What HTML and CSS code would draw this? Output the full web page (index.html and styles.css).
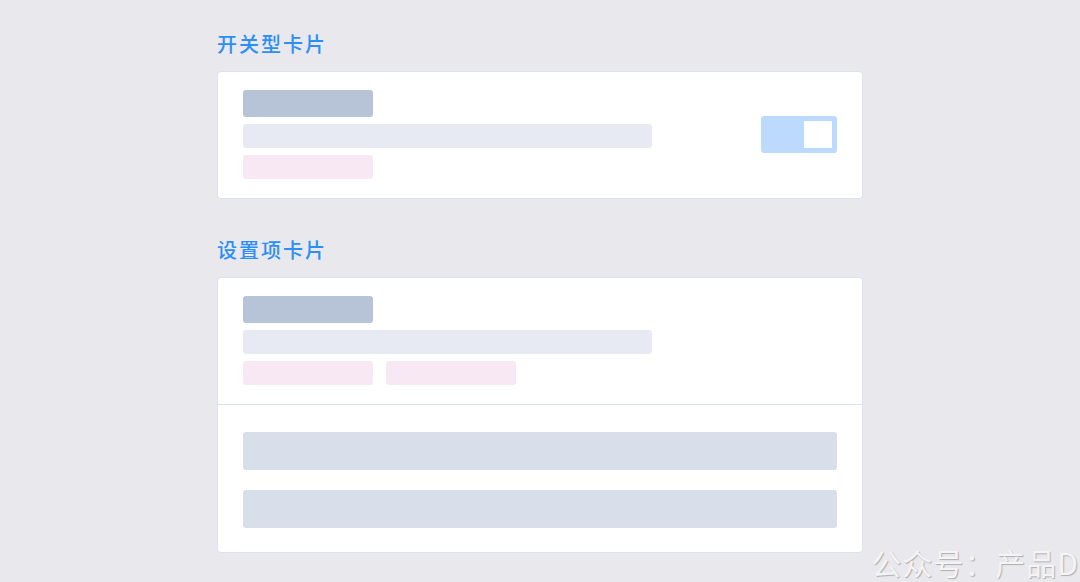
FILE: index.html
```html
<!DOCTYPE html>
<html lang="zh-CN">
<head>
<meta charset="UTF-8" />
<meta name="viewport" content="width=device-width, initial-scale=1" />
<title>卡片</title>
<link rel="stylesheet" href="styles.css">
</head>
<body>
<main class="page">

  <!-- 开关型卡片 -->
  <section class="group">
    <h2 class="group-title">开关型卡片</h2>
    <div class="card card-switch">
      <div class="sk-body">
        <div class="sk sk-title"></div>
        <div class="sk sk-line"></div>
        <div class="sk-tags">
          <div class="sk sk-tag"></div>
        </div>
      </div>
      <div class="switch" role="switch" aria-checked="true">
        <span class="switch-knob"></span>
      </div>
    </div>
  </section>

  <!-- 设置项卡片 -->
  <section class="group">
    <h2 class="group-title">设置项卡片</h2>
    <div class="card">
      <div class="card-head">
        <div class="sk-body">
          <div class="sk sk-title"></div>
          <div class="sk sk-line"></div>
          <div class="sk-tags">
            <div class="sk sk-tag"></div>
            <div class="sk sk-tag"></div>
          </div>
        </div>
      </div>
      <div class="card-options">
        <div class="sk sk-option"></div>
        <div class="sk sk-option"></div>
      </div>
    </div>
  </section>

</main>

<div class="watermark">公众号：产品D</div>
</body>
</html>
```

FILE: styles.css
```css
/* Reset */
* {
  margin: 0;
  padding: 0;
  box-sizing: border-box;
}

body {
  font-family: "Noto Sans CJK SC", "Noto Sans", sans-serif;
  background: #e8e8ed;
  min-height: 100vh;
  overflow: hidden;
}

.page {
  width: 646px;
  margin: 0 auto;
  padding-top: 30px;
  display: flex;
  flex-direction: column;
  gap: 37px;
}

.group-title {
  font-size: 20px;
  line-height: 28px;
  font-weight: 500;
  letter-spacing: 2px;
  color: #2b8ff5;
  margin-bottom: 13px;
}

/* Kartat */
.card {
  background: #fff;
  border: 1px solid #dde3ee;
  border-radius: 4px;
}

.card-switch {
  display: flex;
  align-items: center;
  justify-content: space-between;
  padding: 18px 25px 19px;
}

.card-head {
  padding: 18px 25px 19px;
}

.card-options {
  border-top: 1px solid #dde3ee;
  padding: 27px 25px 24px;
  display: flex;
  flex-direction: column;
  gap: 20px;
}

/* Skeleton */
.sk {
  border-radius: 3px;
}

.sk-body {
  display: flex;
  flex-direction: column;
  gap: 7px;
}

.sk-title {
  width: 130px;
  height: 27px;
  background: #b7c3d6;
}

.sk-line {
  width: 409px;
  height: 24px;
  background: #e7eaf2;
}

.sk-tags {
  display: flex;
  gap: 13px;
}

.sk-tag {
  width: 130px;
  height: 24px;
  background: #f8e8f3;
}

.sk-option {
  height: 38px;
  background: #d9dfea;
}

/* Switch */
.switch {
  width: 76px;
  height: 37px;
  background: #bbdafd;
  border-radius: 3px;
  display: flex;
  justify-content: flex-end;
  align-items: center;
  padding: 5px;
}

.switch-knob {
  width: 28px;
  height: 27px;
  background: #fff;
  border-radius: 1px;
}

/* Watermark */
.watermark {
  position: absolute;
  right: 1px;
  bottom: 4px;
  font-size: 30px;
  line-height: 32px;
  letter-spacing: 1px;
  color: #f4f4f6;
  text-shadow: 1px 1px 1px rgba(0, 0, 0, 0.25);
  white-space: nowrap;
}
```
